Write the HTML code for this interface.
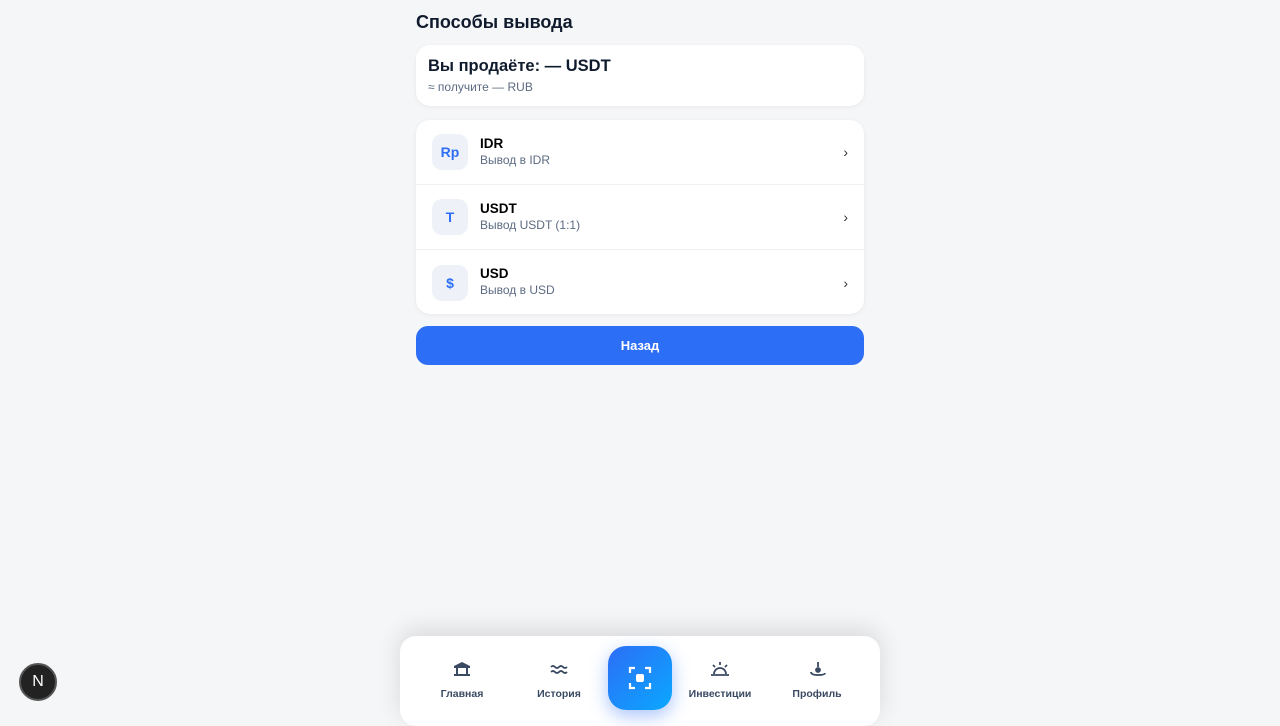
<!DOCTYPE html><html><head><meta charset="utf-8"><style>
*{box-sizing:border-box;margin:0;padding:0}
body{width:1280px;height:720px;background:#f5f6f8;font-family:"Liberation Sans",sans-serif;position:relative;overflow:hidden}
.wrap{position:absolute;left:416px;width:448px}
h1{position:absolute;left:416px;top:12px;font-size:18px;font-weight:bold;color:#0f1b2d}
.card{background:#fff;border-radius:14px;box-shadow:0 1px 4px rgba(0,0,0,.06)}
.sum{top:45px;height:61px;padding:12px 12px}
.sum b{font-size:16.5px;color:#0f1b2d;display:block}
.sum span{font-size:12px;color:#5c6b82;display:block;margin-top:4px}
.list{top:120px;height:194px}
.row{height:65px;display:flex;align-items:center;padding:0 16px;border-bottom:1px solid #eef0f3;position:relative}
.row:last-child{border:none}
.ic{width:36px;height:36px;border-radius:10px;background:#eef2f8;color:#2d6ef6;font-weight:bold;font-size:14px;display:flex;align-items:center;justify-content:center;margin-right:12px}
.t b{font-size:13.5px;color:#000;display:block}
.t span{font-size:12px;color:#5c6b82}
.ch{position:absolute;right:16px;font-size:14px;color:#333}
.btn{top:326px;height:39px;background:#2d6ef6;border-radius:12px;color:#fff;font-weight:bold;font-size:13px;text-align:center;line-height:39px}
.nav{position:absolute;left:400px;top:636px;width:480px;height:90px;background:#fff;border-radius:16px;box-shadow:0 -6px 24px rgba(0,0,0,.12)}
.it{position:absolute;top:25px;width:90px;text-align:center;font-size:10.5px;font-weight:bold;color:#3a4a63}
.it svg{display:block;margin:0 auto 11px}
.fab{position:absolute;left:208px;top:10px;width:64px;height:64px;border-radius:18px;background:linear-gradient(135deg,#2d6ef6,#0aa8ff);box-shadow:0 6px 18px rgba(45,110,246,.4)}
.n{position:absolute;left:19px;top:663px;width:38px;height:38px;border-radius:50%;background:#222;border:2px solid #555;color:#fff;font-size:16px;text-align:center;line-height:34px}
</style></head><body>
<h1>Способы вывода</h1>
<div class="wrap card sum"><b>Вы продаёте: — USDT</b><span>≈ получите — RUB</span></div>
<div class="wrap card list">
<div class="row"><div class="ic">Rp</div><div class="t"><b>IDR</b><span>Вывод в IDR</span></div><div class="ch">›</div></div>
<div class="row"><div class="ic">T</div><div class="t"><b>USDT</b><span>Вывод USDT (1:1)</span></div><div class="ch">›</div></div>
<div class="row"><div class="ic">$</div><div class="t"><b>USD</b><span>Вывод в USD</span></div><div class="ch">›</div></div>
</div>
<div class="wrap btn">Назад</div>
<div class="nav">
<div class="it" style="left:17px"><svg width="20" height="16" viewBox="0 0 20 16"><path d="M2 5L10 1L18 5Z M2 5h16v2H2z M4 7h2v6H4z M14 7h2v6h-2z M2 13h16v2H2z" fill="#3a4a63"/></svg>Главная</div>
<div class="it" style="left:114px"><svg width="20" height="16" viewBox="0 0 20 16" fill="none" stroke="#3a4a63" stroke-width="1.8"><path d="M2 6q2-2 4 0t4 0 4 0 4 0M2 11q2-2 4 0t4 0 4 0 4 0"/></svg>История</div>
<div class="fab"><svg width="64" height="64" viewBox="0 0 64 64" fill="none" stroke="#fff" stroke-width="2.2"><path d="M22 27v-5h5M37 22h5v5M42 37v5h-5M27 42h-5v-5"/><rect x="28" y="28" width="8" height="8" rx="2" fill="#fff" stroke="none"/></svg></div>
<div class="it" style="left:275px"><svg width="22" height="16" viewBox="0 0 22 16" fill="none" stroke="#3a4a63" stroke-width="1.8"><path d="M5 13a6 6 0 0 1 12 0M2 14h18M11 1v3M4 4l2 2M18 4l-2 2"/></svg>Инвестиции</div>
<div class="it" style="left:372px"><svg width="20" height="16" viewBox="0 0 20 16" fill="none" stroke="#3a4a63" stroke-width="1.8"><path d="M11 1v5M4 11q0 3 7 3t7-2"/><circle cx="11" cy="9" r="2" fill="#3a4a63"/></svg>Профиль</div>
</div>
<div class="n">N</div>
</body></html>
